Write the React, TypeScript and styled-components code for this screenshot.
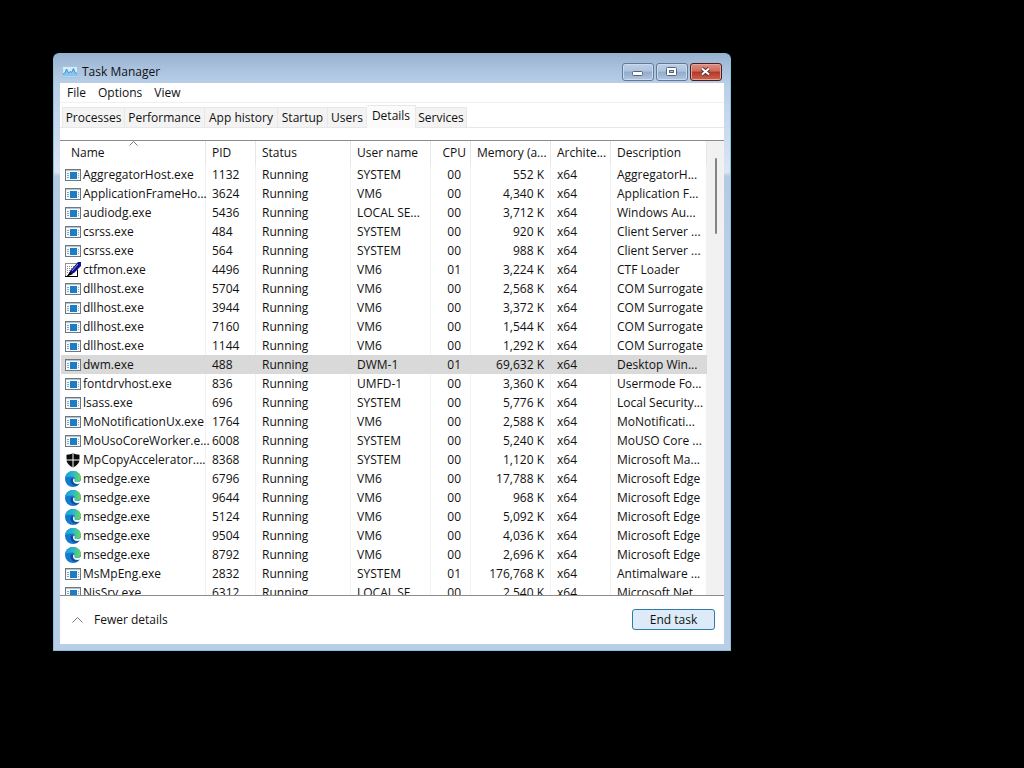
import React from "react";
import styled, { createGlobalStyle, css } from "styled-components";

const GlobalStyle = createGlobalStyle`
  *, *::before, *::after { box-sizing: border-box; }
  body {
    margin: 0;
    background: #000;
    color: #111;
    font: 12px/16px "Open Sans", "Noto Sans", sans-serif;
  }
  button { font: inherit; color: inherit; margin: 0; cursor: default; }
`;

const Desktop = styled.main`
  min-height: 100vh;
  padding: 53px;
  background: #000;
`;

const Window = styled.section`
  display: flex;
  flex-direction: column;
  width: 100%;
  max-width: 678px;
  padding: 0 6px 6px;
  border: 1px solid #7fc4dc;
  border-top-color: #8fb6cc;
  border-radius: 6px 6px 0 0;
  background: linear-gradient(#98b2d0 0, #a9c1dd 14px, #b9cfe8 30px, #d2e1f3 100px, #dbe7f5 118px, #b5cbe4 122px, #b9cfe8 200px);
`;

const TitleBar = styled.header`
  display: flex;
  align-items: center;
  gap: 4px;
  height: 29px;
  padding: 7px 2px 0;
`;

const Title = styled.h1`
  flex: 1;
  margin: 0;
  font-size: 12px;
  font-weight: 400;
`;

const Caption = styled.div`
  display: flex;
  gap: 2px;
`;

const CaptionButton = styled.button<{ $close?: boolean }>`
  display: grid;
  place-items: center;
  width: 32px;
  height: 18px;
  padding: 0;
  border: 1px solid ${(p) => (p.$close ? "#4a1c22" : "#62799a")};
  border-radius: 3px;
  box-shadow: inset 0 0 0 1px ${(p) => (p.$close ? "#e5a59b" : "#cbdbed")};
  background: ${(p) =>
    p.$close
      ? "linear-gradient(#dc9084 0, #cf6a5a 45%, #b53525 50%, #cb6650 100%)"
      : "linear-gradient(#bccfe6 0, #adc3de 45%, #91abca 50%, #b0c7e2 100%)"};
`;

const Client = styled.div`
  background: #fff;
`;

const Menu = styled.nav`
  display: flex;
  height: 20px;
  padding-left: 1px;
  border-bottom: 1px solid #f0f0f0;
`;

const MenuItem = styled.button`
  padding: 0 6px;
  border: 0;
  background: none;
`;

const Tabs = styled.div`
  display: flex;
  align-items: flex-end;
  height: 25px;
  padding: 0 2px;
  margin-bottom: 12px;
  border-bottom: 1px solid #e8e8e8;
`;

const Tab = styled.button<{ $width: number; $active?: boolean }>`
  display: flex;
  align-items: center;
  justify-content: center;
  width: ${(p) => p.$width}px;
  height: 20px;
  padding: 0;
  white-space: nowrap;
  border: 1px solid #e8e8e8;
  border-width: 1px 1px 0 0;
  background: #f3f3f3;
  &:first-child { border-left-width: 1px; }
  ${(p) =>
    p.$active &&
    css`
      height: 23px;
      padding-bottom: 2px;
      margin-bottom: -1px;
      background: #fbfbfb;
    `}
`;

const List = styled.div`
  display: flex;
  height: 456px;
  padding-left: 1px;
  overflow: hidden;
  border: 1px solid #8b8b8b;
  border-width: 1px 0;
`;

const Table = styled.table`
  flex: 1;
  align-self: flex-start;
  width: 100%;
  table-layout: fixed;
  border-collapse: separate;
  border-spacing: 0;
`;

const HeadCell = styled.th<{ $first?: boolean; $right?: boolean }>`
  position: relative;
  height: 24px;
  padding: 0 4px 0 ${(p) => (p.$first ? 10 : 6)}px;
  overflow: hidden;
  border-right: 1px solid #e6e6e6;
  font-weight: 400;
  text-align: ${(p) => (p.$right ? "right" : "left")};
  white-space: nowrap;
`;

const SortMark = styled.svg`
  position: absolute;
  top: 0;
  left: 68px;
`;

const Cell = styled.td<{ $align?: "cpu" | "right" }>`
  height: 19px;
  padding: 0 0 0 6px;
  border-right: 1px solid #f2f2f2;
  white-space: nowrap;
  ${(p) => p.$align && css`
    text-align: right;
    padding: 0 ${p.$align === "cpu" ? 9 : 6}px 0 0;
  `}
`;

const Row = styled.tr<{ $selected?: boolean }>`
  background: ${(p) => (p.$selected ? "#d9d9d9" : "transparent")};
  ${(p) => p.$selected && css`
    ${Cell} { border-color: #d9d9d9; }
  `}
`;

const NameCell = styled(Cell)`
  padding-left: 4px;
`;

const Process = styled.span`
  display: flex;
  align-items: center;
  gap: 2px;
  & > svg { flex: none; }
`;

const ScrollBar = styled.div`
  flex: none;
  width: 17px;
  padding: 17px 7px 0 8px;
  background: #f1f1f1;
`;

const Thumb = styled.div`
  height: 76px;
  border-radius: 1px;
  background: #858585;
`;

const Footer = styled.footer`
  display: flex;
  align-items: center;
  justify-content: space-between;
  height: 48px;
  padding: 0 9px 1px 11px;
`;

const Fewer = styled.button`
  display: flex;
  align-items: center;
  gap: 10px;
  padding: 0;
  border: 0;
  background: none;
`;

const EndTask = styled.button`
  width: 83px;
  height: 21px;
  padding: 0;
  border: 1px solid #2f7ba3;
  border-radius: 3px;
  background: #dcebf7;
`;

const AppIcon = () => (
  <svg width="16" height="16" viewBox="0 0 16 16" aria-hidden="true">
    <rect x="0.5" y="2.5" width="15" height="11" fill="#d5ebfa" stroke="#a3c6e2" />
    <path d="M1 10l2-1 1.500-4 2 4 2-1.500 1 1 2-4 1.500 4 2 1v3H1z" fill="#8cc3ec" />
    <path d="M1 10l2-1 1.500-4 2 4 2-1.500 1 1 2-4 1.500 4 2 1" fill="none" stroke="#3f8fce" />
  </svg>
);

const ExeIcon = () => (
  <svg width="16" height="16" viewBox="0 0 16 16" aria-hidden="true">
    <rect x="0.5" y="2.5" width="15" height="11" fill="#f5f8fa" stroke="#6d7880" />
    <path d="M1 3.5h14" stroke="#b8c2c9" />
    <rect x="5" y="5" width="7" height="7" fill="#1c7cc4" />
    <path d="M2 6.500h2M2 8.500h2M2 10.500h2M13 6.500h1M13 8.500h1M13 10.500h1" stroke="#8fa6b8" />
  </svg>
);

const PenIcon = () => (
  <svg width="16" height="16" viewBox="0 0 16 16" aria-hidden="true">
    <path d="M0.500 1.500h12v13h-12z" fill="#fff" stroke="#222" strokeDasharray="1 1" />
    <path d="M2 4.500h7M2 6.500h6M2 8.500h4M2 10.500h3" stroke="#888" strokeDasharray="1 1" />
    <path d="M0 14.500h12.500V8" fill="none" stroke="#000" strokeWidth="1" />
    <path d="M4 13l1-4 8-9h3v4l-7 7z" fill="#10108c" />
    <path d="M7 9l6-7" stroke="#8c9af0" />
    <path d="M1 15l4-5 3 2z" fill="#000" />
  </svg>
);

const ShieldIcon = () => (
  <svg width="16" height="16" viewBox="0 0 16 16" aria-hidden="true">
    <path d="M8 1c1.500 1 3.500 1.600 6.500 1.800v4.700c0 3.500-2.500 6-6.500 8-4-2-6.500-4.500-6.500-8V2.800C4.500 2.600 6.500 2 8 1z" fill="#0c0c0c" />
    <path d="M8 1v14.500M1 8h14" stroke="#fff" />
  </svg>
);

const EdgeIcon = () => (
  <svg width="16" height="16" viewBox="0 0 16 16" aria-hidden="true">
    <defs>
      <linearGradient id="edgeTop" x1="0" y1="0.300" x2="1" y2="0.400">
        <stop offset="0" stopColor="#1e9be2" />
        <stop offset="0.500" stopColor="#2bb9c8" />
        <stop offset="1" stopColor="#6ad85a" />
      </linearGradient>
    </defs>
    <circle cx="8" cy="8" r="8" fill="#1479cf" />
    <path d="M0 7.500C0.500 3 4 0 8 0c4.500 0 8 3 8 6.800C16 9.500 14 11 11.800 11c-2 0-2.800-.7-2.300-1.500.9-1.500.3-4-2.700-4C3.500 5.500.8 6.200 0 7.500z" fill="url(#edgeTop)" />
    <path d="M5.600 8.500C5 12 8 15 11.500 14.700c1.200-.2 2.300-.8 3.100-1.700-3 1.300-6.600 0-6.500-3 0-1.200.5-2 1-2.300C7.700 6.800 6 7 5.600 8.500z" fill="#124c95" />
    <path d="M8.600 7.500c-1.500 2.300 0 5.400 3.900 5.400 1.500 0 2.700-.4 3.500-1.300V9.500C15 10.600 13.500 11 11.800 11c-2 0-2.800-.7-2.300-1.500.4-.7.300-2-.9-2z" fill="#fff" />
  </svg>
);

const icons = { exe: ExeIcon, pen: PenIcon, shield: ShieldIcon, edge: EdgeIcon };

const Chevron = () => (
  <svg width="13" height="8" viewBox="0 0 13 8" fill="none" stroke="#777" aria-hidden="true">
    <path d="M1.500 6.500l5-5 5 5" />
  </svg>
);

const tabs: [string, number][] = [
  ["Processes", 63], ["Performance", 80], ["App history", 73], ["Startup", 50],
  ["Users", 39], ["Details", 49], ["Services", 51],
];

const columns: [string, number | undefined][] = [
  ["Name", 145], ["PID", 50], ["Status", 95], ["User name", 80],
  ["CPU", 40], ["Memory (a...", 80], ["Archite...", 60], ["Description", undefined],
];

type Proc = [string, string, string, string, string, string, (keyof typeof icons)?];

const processes: Proc[] = [
  ["AggregatorHost.exe", "1132", "SYSTEM", "00", "552 K", "AggregatorH..."],
  ["ApplicationFrameHo...", "3624", "VM6", "00", "4,340 K", "Application F..."],
  ["audiodg.exe", "5436", "LOCAL SE...", "00", "3,712 K", "Windows Au..."],
  ["csrss.exe", "484", "SYSTEM", "00", "920 K", "Client Server ..."],
  ["csrss.exe", "564", "SYSTEM", "00", "988 K", "Client Server ..."],
  ["ctfmon.exe", "4496", "VM6", "01", "3,224 K", "CTF Loader", "pen"],
  ["dllhost.exe", "5704", "VM6", "00", "2,568 K", "COM Surrogate"],
  ["dllhost.exe", "3944", "VM6", "00", "3,372 K", "COM Surrogate"],
  ["dllhost.exe", "7160", "VM6", "00", "1,544 K", "COM Surrogate"],
  ["dllhost.exe", "1144", "VM6", "00", "1,292 K", "COM Surrogate"],
  ["dwm.exe", "488", "DWM-1", "01", "69,632 K", "Desktop Win..."],
  ["fontdrvhost.exe", "836", "UMFD-1", "00", "3,360 K", "Usermode Fo..."],
  ["lsass.exe", "696", "SYSTEM", "00", "5,776 K", "Local Security..."],
  ["MoNotificationUx.exe", "1764", "VM6", "00", "2,588 K", "MoNotificati..."],
  ["MoUsoCoreWorker.e...", "6008", "SYSTEM", "00", "5,240 K", "MoUSO Core ..."],
  ["MpCopyAccelerator....", "8368", "SYSTEM", "00", "1,120 K", "Microsoft Ma...", "shield"],
  ["msedge.exe", "6796", "VM6", "00", "17,788 K", "Microsoft Edge", "edge"],
  ["msedge.exe", "9644", "VM6", "00", "968 K", "Microsoft Edge", "edge"],
  ["msedge.exe", "5124", "VM6", "00", "5,092 K", "Microsoft Edge", "edge"],
  ["msedge.exe", "9504", "VM6", "00", "4,036 K", "Microsoft Edge", "edge"],
  ["msedge.exe", "8792", "VM6", "00", "2,696 K", "Microsoft Edge", "edge"],
  ["MsMpEng.exe", "2832", "SYSTEM", "01", "176,768 K", "Antimalware ..."],
  ["NisSrv.exe", "6312", "LOCAL SE...", "00", "2,540 K", "Microsoft Net..."],
];

export default function App() {
  return (
    <Desktop>
      <GlobalStyle />
      <Window aria-label="Task Manager">
        <TitleBar>
          <AppIcon />
          <Title>Task Manager</Title>
          <Caption>
            <CaptionButton aria-label="Minimize">
              <svg width="12" height="10" viewBox="0 0 12 10">
                <rect x="0.5" y="4.500" width="10" height="4" rx="1" fill="#fff" stroke="#55637a" />
              </svg>
            </CaptionButton>
            <CaptionButton aria-label="Maximize">
              <svg width="12" height="10" viewBox="0 0 12 10">
                <rect x="0.500" y="0.500" width="10" height="8" rx="1" fill="#fff" stroke="#55637a" />
                <rect x="3.500" y="3.500" width="4" height="2" fill="#a9bfd9" stroke="#55637a" />
              </svg>
            </CaptionButton>
            <CaptionButton $close aria-label="Close">
              <svg width="12" height="10" viewBox="0 0 12 10">
                <path d="M2 1.500l7 6M9 1.500l-7 6" stroke="#5a3038" strokeWidth="4" />
                <path d="M2 1.500l7 6M9 1.500l-7 6" stroke="#fff" strokeWidth="2" />
              </svg>
            </CaptionButton>
          </Caption>
        </TitleBar>
        <Client>
          <Menu>
            <MenuItem>File</MenuItem>
            <MenuItem>Options</MenuItem>
            <MenuItem>View</MenuItem>
          </Menu>
          <Tabs role="tablist">
            {tabs.map(([label, width]) => (
              <Tab key={label} role="tab" $width={width} $active={label === "Details"} aria-selected={label === "Details"}>
                {label}
              </Tab>
            ))}
          </Tabs>
          <List>
            <Table>
              <colgroup>
                {columns.map(([label, width]) => <col key={label} width={width} />)}
              </colgroup>
              <thead>
                <tr>
                  {columns.map(([label], i) => (
                    <HeadCell key={label} scope="col" $first={i === 0} $right={label === "CPU"}>
                      {label}
                      {i === 0 && (
                        <SortMark width="9" height="5" viewBox="0 0 9 5" fill="none" stroke="#777" aria-hidden="true">
                          <path d="M0.500 4.500l4-4 4 4" />
                        </SortMark>
                      )}
                    </HeadCell>
                  ))}
                </tr>
              </thead>
              <tbody>
                {processes.map(([name, pid, user, cpu, memory, description, icon = "exe"]) => {
                  const Icon = icons[icon];
                  return (
                    <Row key={pid} $selected={name === "dwm.exe"}>
                      <NameCell><Process><Icon />{name}</Process></NameCell>
                      <Cell>{pid}</Cell>
                      <Cell>Running</Cell>
                      <Cell>{user}</Cell>
                      <Cell $align="cpu">{cpu}</Cell>
                      <Cell $align="right">{memory}</Cell>
                      <Cell>x64</Cell>
                      <Cell>{description}</Cell>
                    </Row>
                  );
                })}
              </tbody>
            </Table>
            <ScrollBar><Thumb /></ScrollBar>
          </List>
          <Footer>
            <Fewer><Chevron />Fewer details</Fewer>
            <EndTask>End task</EndTask>
          </Footer>
        </Client>
      </Window>
    </Desktop>
  );
}
